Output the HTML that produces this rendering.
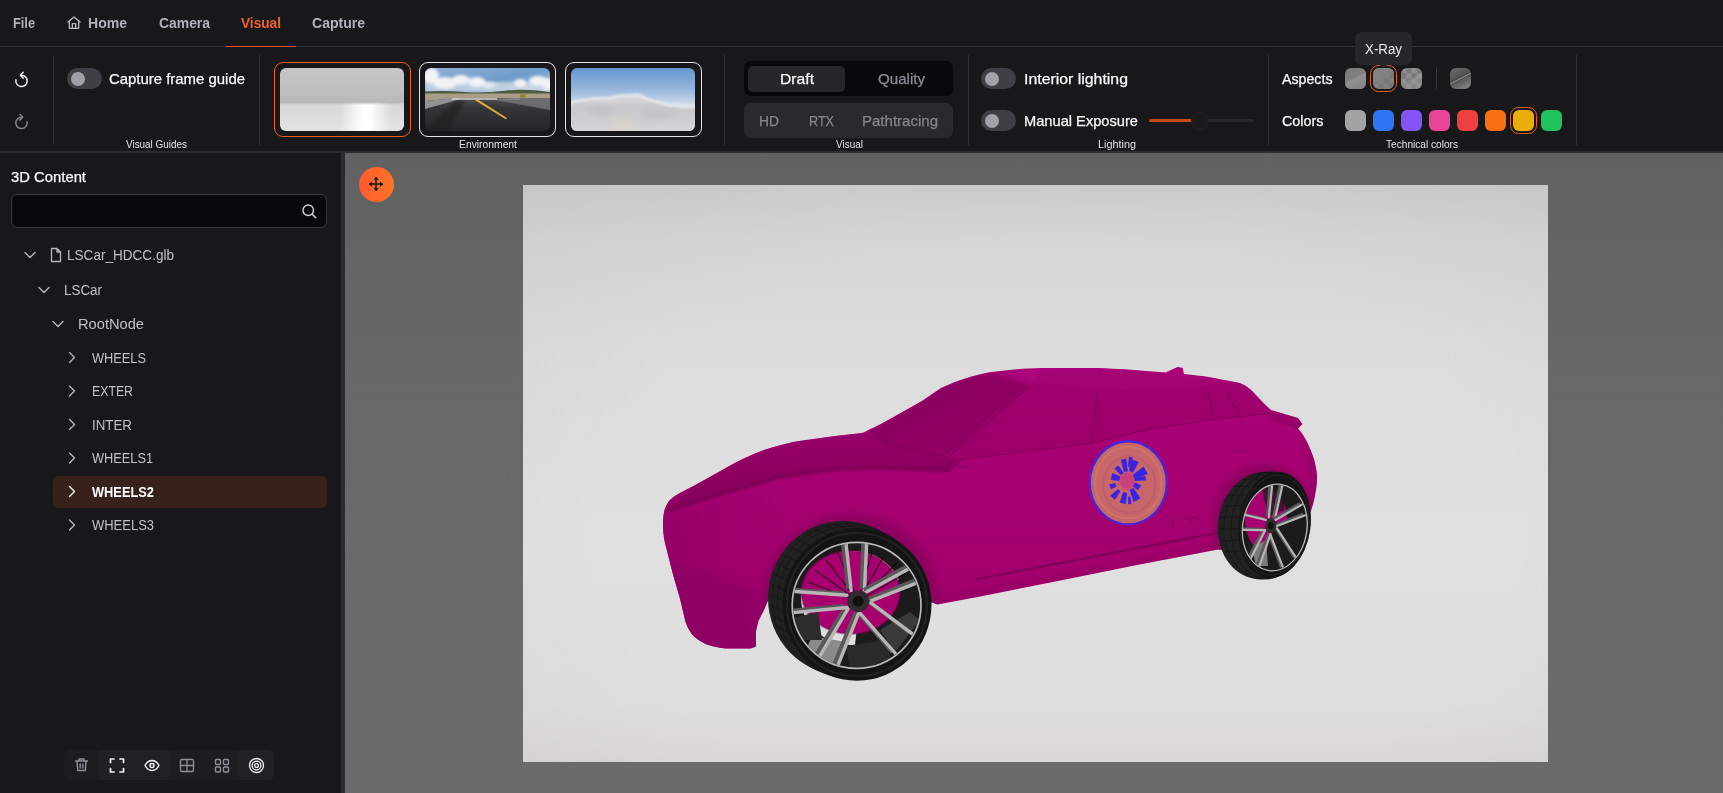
<!DOCTYPE html>
<html>
<head>
<meta charset="utf-8">
<style>
*{box-sizing:border-box;margin:0;padding:0}
html,body{width:1723px;height:793px;overflow:hidden;background:#18181b;font-family:"Liberation Sans",sans-serif;}
.a{position:absolute}
.t{position:absolute;white-space:nowrap;line-height:1;transform-origin:0 50%}
.m{-webkit-text-stroke:.25px currentColor}
.vsep{position:absolute;top:55px;height:90px;width:1px;background:#2f2f35}
.tog{position:absolute;width:35px;height:21px;border-radius:11px;background:#3f3f46}
.tog i{position:absolute;left:4px;top:3.5px;width:14px;height:14px;border-radius:7px;background:#a1a1aa}
.sw{position:absolute;width:21px;height:21px;border-radius:6px;top:110px}
.asw{position:absolute;width:21px;height:21px;border-radius:6px;top:68px;overflow:hidden}
.thumb{position:absolute;top:62px;width:137px;height:75px;border-radius:9px;border:1.5px solid #e4e4e7}
.thumb svg{position:absolute;left:4.5px;top:4.5px;border-radius:6px}
svg{display:block}
</style>
</head>
<body>
<!-- menubar -->
<div class="a" style="left:0;top:0;width:1723px;height:46px;background:#18181b"></div>
<div class="a" style="left:0;top:46px;width:1723px;height:1px;background:#33333a"></div>
<div class="a" style="left:226px;top:45.5px;width:70px;height:1.5px;background:#e8561f"></div>
<!-- home icon -->
<svg class="a" style="left:66px;top:15px" width="16" height="16" viewBox="0 0 24 24" fill="none" stroke="#b9b9c2" stroke-width="2" stroke-linecap="round" stroke-linejoin="round"><path d="M3 10.5 12 3l9 7.5"/><path d="M5 9v11h14V9"/><path d="M9.5 20v-7h5v7"/></svg>
<!-- toolbar -->
<div class="a" style="left:0;top:47px;width:1723px;height:105px;background:#18181b"></div>
<div class="a" style="left:0;top:151px;width:1723px;height:1.5px;background:#2c2c31"></div>
<div class="vsep" style="left:53px"></div>
<div class="vsep" style="left:259px"></div>
<div class="vsep" style="left:724px"></div>
<div class="vsep" style="left:968px"></div>
<div class="vsep" style="left:1268px"></div>
<div class="vsep" style="left:1576px"></div>
<!-- undo / redo -->
<svg class="a" style="left:10px;top:68px" width="24" height="24" viewBox="0 0 24 24" fill="none" stroke="#ededf0" stroke-width="1.5" stroke-linecap="round" stroke-linejoin="round"><path d="M11.500 7.200A5.700 5.700 0 1 1 5.900 11.700"/><path d="M13.200 4.300 10.300 7.200l2.900 2.900"/></svg>
<svg class="a" style="left:10px;top:110px" width="24" height="24" viewBox="0 0 24 24" fill="none" stroke="#85858e" stroke-width="1.5" stroke-linecap="round" stroke-linejoin="round"><path d="M11.500 7.200A5.700 5.700 0 1 0 17.100 11.700"/><path d="M9.800 4.300l2.900 2.900-2.900 2.900"/></svg>
<!-- toggles -->
<div class="tog" style="left:67px;top:68px"><i></i></div>
<div class="tog" style="left:981px;top:68px"><i></i></div>
<div class="tog" style="left:981px;top:110px"><i></i></div>
<!-- env thumbs -->
<div class="thumb" style="left:274px;border-color:#e8611f">
<svg width="124" height="63" viewBox="0 0 125 63" preserveAspectRatio="none"><defs><linearGradient id="e1a" x1="0" y1="0" x2="0" y2="1"><stop offset="0" stop-color="#c6c6c6"/><stop offset=".3" stop-color="#c0c0c0"/><stop offset=".55" stop-color="#b9b9b9"/><stop offset=".585" stop-color="#d8d8d8"/><stop offset="1" stop-color="#e3e3e3"/></linearGradient><linearGradient id="e1b" x1="0" y1="0" x2="1" y2="0"><stop offset=".48" stop-color="#fff" stop-opacity="0"/><stop offset=".66" stop-color="#fff" stop-opacity=".95"/><stop offset=".73" stop-color="#fff" stop-opacity=".95"/><stop offset=".9" stop-color="#fff" stop-opacity="0"/></linearGradient><linearGradient id="e1c" x1="0" y1="0" x2="0" y2="1"><stop offset="0" stop-color="#000"/><stop offset=".12" stop-color="#fff"/><stop offset="1" stop-color="#fff"/></linearGradient><mask id="e1m"><rect y="34" width="125" height="29" fill="url(#e1c)"/></mask></defs><rect width="125" height="63" fill="url(#e1a)"/><rect y="34" width="125" height="29" fill="url(#e1b)" mask="url(#e1m)"/></svg>
</div>
<div class="thumb" style="left:419px">
<svg width="125" height="63" viewBox="0 0 126 63" preserveAspectRatio="none"><defs><linearGradient id="e2a" x1="0" y1="0" x2="1" y2="1"><stop offset="0" stop-color="#8fb0d2"/><stop offset=".5" stop-color="#6f9ccb"/><stop offset="1" stop-color="#c9d6e2"/></linearGradient><linearGradient id="e2b" x1="0" y1="0" x2="0" y2="1"><stop offset="0" stop-color="#505052"/><stop offset=".3" stop-color="#353537"/><stop offset="1" stop-color="#262628"/></linearGradient><filter id="b1" x="-20%" y="-20%" width="140%" height="140%"><feGaussianBlur stdDeviation="1.6"/></filter><filter id="b05" x="-20%" y="-20%" width="140%" height="140%"><feGaussianBlur stdDeviation=".6"/></filter></defs>
<rect width="126" height="30" fill="url(#e2a)"/>
<rect y="14" width="126" height="10" fill="#d3dde6" opacity=".75" filter="url(#b1)"/>
<g fill="#f1f3f5" filter="url(#b1)"><ellipse cx="6" cy="8" rx="8" ry="8"/><ellipse cx="20" cy="15" rx="12" ry="6"/><ellipse cx="36" cy="12" rx="9" ry="5"/><ellipse cx="52" cy="14" rx="9" ry="5"/><ellipse cx="64" cy="17" rx="8" ry="3" opacity=".8"/><ellipse cx="96" cy="15" rx="6" ry="4"/><ellipse cx="114" cy="13" rx="9" ry="5"/><ellipse cx="124" cy="16" rx="6" ry="6"/></g>
<path d="M0 23.500Q20 22.500 40 24T80 22.800T126 24V26.500H0Z" fill="#4f5a42" filter="url(#b05)"/>
<rect y="25.500" width="126" height="8" fill="#a99d86"/>
<path d="M0 33 32 30H126V63H0Z" fill="url(#e2b)"/>
<path d="M90 30h36v12L70 32Z" fill="#77777a" opacity=".8" filter="url(#b05)"/>
<path d="M0 33 32 30 36 31 0 41Z" fill="#9a9a9c" opacity=".9" filter="url(#b05)"/>
<path d="M0 63 30 33H40L22 63Z" fill="#1c1c1e" opacity=".55" filter="url(#b1)"/>
<path d="M27 30h46v2H27z" fill="#dedede" opacity=".7" filter="url(#b05)"/><path d="M74 30.500h22v1H74z" fill="#bdbdbd" opacity=".5"/>
<path d="M50 32 81 51l2-.8L54 32Z" fill="#dfae35"/>
<rect x="96" y="26.500" width="5" height="3" fill="#8f7d1e"/>
</svg>
</div>
<div class="thumb" style="left:565px">
<svg width="124.500" height="63" viewBox="0 0 125 63" preserveAspectRatio="none"><defs><linearGradient id="e3a" x1="0" y1="0" x2="0" y2="1"><stop offset="0" stop-color="#6596cf"/><stop offset=".3" stop-color="#8fb2da"/><stop offset=".48" stop-color="#b7cbe3"/><stop offset=".62" stop-color="#dde5ee"/><stop offset="1" stop-color="#d4d4d6"/></linearGradient><linearGradient id="e3b" x1="0" y1="0" x2="0" y2="1"><stop offset="0" stop-color="#dcdcde"/><stop offset=".3" stop-color="#c9c9cb"/><stop offset=".7" stop-color="#cfcfd1"/><stop offset="1" stop-color="#dadadc"/></linearGradient><filter id="b2" x="-20%" y="-30%" width="140%" height="160%"><feGaussianBlur stdDeviation="1.100"/></filter><filter id="b3" x="-20%" y="-30%" width="140%" height="160%"><feGaussianBlur stdDeviation="2.500"/></filter></defs><rect width="125" height="63" fill="url(#e3a)"/>
<path d="M-3 36C4 33 9 32 14 32C22 30 30 30.500 38 30C46 27.500 56 27.500 63 27C68 26 72 28 76 31C84 33 92 35.500 97 37C108 38.500 116 38.500 128 39V66H-3Z" fill="url(#e3b)" filter="url(#b2)"/>
<path d="M-3 36C4 33 9 32 14 32C22 30 30 30.500 38 30C46 27.500 56 27.500 63 27C68 26 72 28 76 31C84 33 92 35.500 97 37C108 38.500 116 38.500 128 39" fill="none" stroke="#ededf0" stroke-width="2.500" opacity=".8" filter="url(#b2)"/>
<ellipse cx="50" cy="57" rx="12" ry="9" fill="#d9d2c8" opacity=".6" filter="url(#b3)"/>
<ellipse cx="30" cy="42" rx="14" ry="5" fill="#bdbdbf" opacity=".6" filter="url(#b3)"/><ellipse cx="88" cy="46" rx="18" ry="5" fill="#bfbfc1" opacity=".6" filter="url(#b3)"/></svg>
</div>
<!-- visual group -->
<div class="a" style="left:744px;top:61px;width:209px;height:35px;border-radius:7px;background:#09090b"></div>
<div class="a" style="left:748px;top:66px;width:97px;height:26px;border-radius:5px;background:#27272a"></div>
<div class="a" style="left:744px;top:103px;width:209px;height:35px;border-radius:7px;background:#2a2a2e"></div>
<!-- slider -->
<div class="a" style="left:1149px;top:119px;width:105px;height:3px;border-radius:2px;background:#27272a"></div>
<div class="a" style="left:1149px;top:119px;width:46px;height:3px;border-radius:2px;background:#c44a1c"></div>
<div class="a" style="left:1191px;top:111.5px;width:18px;height:18px;border-radius:9px;background:#1a1a1d;border:1.5px solid #242428"></div>
<!-- aspects -->
<div class="asw" style="left:1345px"><svg width="21" height="21"><defs><linearGradient id="a1" x1="0" y1="0" x2=".6" y2="1"><stop offset="0" stop-color="#777"/><stop offset="1" stop-color="#8d8d8d"/></linearGradient><linearGradient id="a1b" x1="0" y1="0" x2=".6" y2="1"><stop offset="0" stop-color="#a0a0a0"/><stop offset="1" stop-color="#848484"/></linearGradient></defs><rect width="21" height="21" fill="url(#a1)"/><path d="M0 15.500 21 4.500V21H0Z" fill="url(#a1b)"/></svg></div>
<div class="a" style="left:1370px;top:65px;width:27px;height:27px;border-radius:8.500px;border:1.500px solid #e8611f"></div>
<div class="asw" style="left:1373px"><svg width="21" height="21"><rect width="21" height="21" fill="#7f7f7f"/><g fill="#6f6f6f" opacity=".8"><rect x="0" y="10.500" width="5.250" height="5.250"/><rect x="10.500" y="10.500" width="5.250" height="5.250"/><rect x="5.250" y="5.250" width="5.250" height="5.250"/><rect x="15.750" y="5.250" width="5.250" height="5.250"/><rect x="5.250" y="15.750" width="5.250" height="5.250"/><rect x="15.750" y="15.750" width="5.250" height="5.250"/></g><path d="M0 0H21V5L0 16Z" fill="#838383" opacity=".85"/><path d="M0 16 21 5V21H0Z" fill="#8c8c8c" opacity=".25"/></svg></div>
<div class="asw" style="left:1401px"><svg width="21" height="21"><rect width="21" height="21" fill="#8f8f8f"/><g fill="#7a7a7a"><rect x="5.250" y="0" width="5.250" height="5.250"/><rect x="15.750" y="0" width="5.250" height="5.250"/><rect x="0" y="5.250" width="5.250" height="5.250"/><rect x="10.500" y="5.250" width="5.250" height="5.250"/><rect x="5.250" y="10.500" width="5.250" height="5.250"/><rect x="15.750" y="10.500" width="5.250" height="5.250"/><rect x="0" y="15.750" width="5.250" height="5.250"/><rect x="10.500" y="15.750" width="5.250" height="5.250"/></g><path d="M0 16 21 5V21H0Z" fill="#a0a0a0" opacity=".35"/></svg></div>
<div class="a" style="left:1436px;top:68px;width:1px;height:21px;background:#34343a"></div>
<div class="asw" style="left:1450px"><svg width="21" height="21"><defs><linearGradient id="a4" x1="0" y1="0" x2=".5" y2="1"><stop offset="0" stop-color="#6e6e6e"/><stop offset=".5" stop-color="#555"/><stop offset=".52" stop-color="#4a4a4a"/><stop offset="1" stop-color="#7a7a7a"/></linearGradient></defs><rect width="21" height="21" fill="url(#a4)"/><path d="M0 16 21 5" stroke="#a8a8a8" stroke-width=".9" opacity=".8"/></svg></div>
<!-- colors -->
<div class="sw" style="left:1345px;background:#a3a3a3"></div>
<div class="sw" style="left:1373px;background:#2f74f2"></div>
<div class="sw" style="left:1401px;background:#8554f4"></div>
<div class="sw" style="left:1429px;background:#ea4496"></div>
<div class="sw" style="left:1457px;background:#ec3f3f"></div>
<div class="sw" style="left:1485px;background:#f86f14"></div>
<div class="a" style="left:1510px;top:107px;width:27px;height:27px;border-radius:8.5px;border:1.5px solid #e8611f"></div>
<div class="sw" style="left:1513px;background:#ebad0a"></div>
<div class="sw" style="left:1541px;background:#20c05a"></div>
<!-- tooltip -->
<div class="a" style="left:1355px;top:32px;width:57px;height:33px;border-radius:7px;background:#27272a"></div>
<svg class="a" style="left:1378px;top:64px" width="11" height="5"><path d="M0 0h11L5.500 4Z" fill="#27272a"/></svg>
<!-- left panel -->
<div class="a" style="left:0;top:153px;width:341px;height:640px;background:#18181b"></div>
<div class="a" style="left:341px;top:153px;width:4px;height:640px;background:#2b2b30"></div>
<div class="a" style="left:11px;top:194px;width:316px;height:34px;border-radius:6px;background:#09090b;border:1px solid #3a3a40"></div>
<svg class="a" style="left:300px;top:202px" width="18" height="18" viewBox="0 0 24 24" fill="none" stroke="#d0d0d6" stroke-width="1.900" stroke-linecap="round"><circle cx="11" cy="11" r="7"/><path d="M16.5 16.5 21 21"/></svg>
<div class="a" style="left:53px;top:476px;width:274px;height:31.5px;border-radius:5px;background:#37211a"></div>
<!-- chevrons -->
<svg class="a" style="left:0;top:240px" width="100" height="300" viewBox="0 0 100 300" fill="none" stroke="#b6b6be" stroke-width="1.4" stroke-linecap="round" stroke-linejoin="round">
<path d="M25 12.5l5 5 5-5"/>
<path d="M39 47.5l5 5 5-5"/>
<path d="M53 81.5l5 5 5-5"/>
<path d="M69.5 112.5l5 5-5 5"/>
<path d="M69.5 146l5 5-5 5"/>
<path d="M69.5 179.5l5 5-5 5"/>
<path d="M69.5 213l5 5-5 5"/>
<path d="M69.5 246.5l5 5-5 5" stroke="#fff"/>
<path d="M69.5 280l5 5-5 5"/>
<path d="M51.500 8.500h5.500l3.500 3.500v9.500h-9z M57 8.500v3.500h3.500" stroke-width="1.300"/>
</svg>
<!-- bottom toolbar -->
<div class="a" style="left:64px;top:750px;width:210px;height:30px;border-radius:6px;background:#1d1d20"></div>
<div class="a" style="left:99px;top:750px;width:70px;height:30px;background:#212124"></div>
<div class="a" style="left:239px;top:750px;width:35px;height:30px;border-radius:0 6px 6px 0;background:#212124"></div>
<svg class="a" style="left:64px;top:750px" width="210" height="30" viewBox="0 0 210 30" fill="none" stroke-width="1.4" stroke-linecap="round" stroke-linejoin="round">
<g stroke="#8e8e97"><path d="M11.5 11h12M13 11l.7 9.5h7.6L22 11M15 11V9h5v2M16.2 14v4M18.8 14v4"/></g>
<g stroke="#f4f4f5" stroke-width="1.7"><path d="M46.500 12.5V9h3.500M56 9h3.500v3.500M59.500 18.500V22H56M50 22h-3.500v-3.500"/></g>
<g stroke="#f4f4f5" stroke-width="1.5"><path d="M81 15.500c2-3.700 4.500-5 7-5s5 1.300 7 5c-2 3.700-4.500 5-7 5s-5-1.300-7-5z"/><circle cx="88" cy="15.500" r="2"/></g>
<g stroke="#8e8e97"><rect x="116.500" y="9.500" width="13" height="12" rx="1.500"/><path d="M116.500 15.500h13M123 9.500v12"/></g>
<g stroke="#8e8e97"><rect x="151.500" y="9.500" width="5" height="5" rx="1"/><rect x="159.500" y="9.500" width="5" height="5" rx="1"/><rect x="151.500" y="17" width="5" height="5" rx="1"/><rect x="159.500" y="17" width="5" height="5" rx="1"/></g>
<g stroke="#f4f4f5" stroke-width="1.3"><circle cx="192.500" cy="15.500" r="7"/><circle cx="192.500" cy="15.500" r="4.400"/><circle cx="192.500" cy="15.500" r="1.900"/></g>
</svg>
<span class="t" style="left:13px;top:16.05px;font-size:14.5px;font-weight:bold;color:#b2b2bc;transform:scaleX(0.8806)">File</span>
<span class="t" style="left:88px;top:16.05px;font-size:14.5px;font-weight:bold;color:#b2b2bc;transform:scaleX(0.9678)">Home</span>
<span class="t" style="left:159px;top:16.05px;font-size:14.5px;font-weight:bold;color:#b2b2bc;transform:scaleX(0.9586)">Camera</span>
<span class="t" style="left:241px;top:16.05px;font-size:14.5px;font-weight:bold;color:#f4602a;transform:scaleX(0.9422)">Visual</span>
<span class="t" style="left:312px;top:16.05px;font-size:14.5px;font-weight:bold;color:#b2b2bc;transform:scaleX(0.9672)">Capture</span>
<span class="t m" style="left:109px;top:70.90px;font-size:15px;font-weight:normal;color:#fafafa;transform:scaleX(0.9945)">Capture frame guide</span>
<span class="t m" style="left:1024px;top:70.90px;font-size:15px;font-weight:normal;color:#fafafa;transform:scaleX(1.0570)">Interior lighting</span>
<span class="t m" style="left:1024px;top:112.90px;font-size:15px;font-weight:normal;color:#fafafa;transform:scaleX(0.9766)">Manual Exposure</span>
<span class="t m" style="left:1281.5px;top:70.90px;font-size:15px;font-weight:normal;color:#fafafa;transform:scaleX(0.9464)">Aspects</span>
<span class="t m" style="left:1281.5px;top:112.90px;font-size:15px;font-weight:normal;color:#fafafa;transform:scaleX(0.9571)">Colors</span>
<span class="t" style="left:125.5px;top:138.65px;font-size:10.5px;font-weight:normal;color:#e4e4e7;transform:scaleX(0.9441)">Visual Guides</span>
<span class="t" style="left:459px;top:138.65px;font-size:10.5px;font-weight:normal;color:#e4e4e7;transform:scaleX(0.9838)">Environment</span>
<span class="t" style="left:835.5px;top:138.65px;font-size:10.5px;font-weight:normal;color:#e4e4e7;transform:scaleX(0.9500)">Visual</span>
<span class="t" style="left:1098px;top:138.65px;font-size:10.5px;font-weight:normal;color:#e4e4e7;transform:scaleX(1.0331)">Lighting</span>
<span class="t" style="left:1386px;top:138.65px;font-size:10.5px;font-weight:normal;color:#e4e4e7;transform:scaleX(0.9638)">Technical colors</span>
<span class="t m" style="left:780px;top:70.90px;font-size:15px;font-weight:normal;color:#fafafa;transform:scaleX(1.0457)">Draft</span>
<span class="t m" style="left:877.5px;top:70.90px;font-size:15px;font-weight:normal;color:#8b8b94;transform:scaleX(1.0067)">Quality</span>
<span class="t m" style="left:759px;top:112.90px;font-size:15px;font-weight:normal;color:#85858e;transform:scaleX(0.9229)">HD</span>
<span class="t m" style="left:808.5px;top:112.90px;font-size:15px;font-weight:normal;color:#85858e;transform:scaleX(0.8408)">RTX</span>
<span class="t m" style="left:862px;top:112.90px;font-size:15px;font-weight:normal;color:#85858e;transform:scaleX(1.0014)">Pathtracing</span>
<span class="t" style="left:1365px;top:42.30px;font-size:14px;font-weight:normal;color:#ececef;transform:scaleX(0.9510)">X-Ray</span>
<span class="t m" style="left:11px;top:168.90px;font-size:15px;font-weight:normal;color:#fafafa;transform:scaleX(0.9883)">3D Content</span>
<span class="t" style="left:67px;top:248.30px;font-size:14px;font-weight:normal;color:#c0c0c8;transform:scaleX(0.9685)">LSCar_HDCC.glb</span>
<span class="t" style="left:64.3px;top:283.30px;font-size:14px;font-weight:normal;color:#c0c0c8;transform:scaleX(0.9575)">LSCar</span>
<span class="t" style="left:78px;top:317.30px;font-size:14px;font-weight:normal;color:#c0c0c8;transform:scaleX(1.0468)">RootNode</span>
<span class="t" style="left:92px;top:350.80px;font-size:14px;font-weight:normal;color:#c0c0c8;transform:scaleX(0.9133)">WHEELS</span>
<span class="t" style="left:92px;top:384.30px;font-size:14px;font-weight:normal;color:#c0c0c8;transform:scaleX(0.8782)">EXTER</span>
<span class="t" style="left:92px;top:417.80px;font-size:14px;font-weight:normal;color:#c0c0c8;transform:scaleX(0.9524)">INTER</span>
<span class="t" style="left:92px;top:451.30px;font-size:14px;font-weight:normal;color:#c0c0c8;transform:scaleX(0.9115)">WHEELS1</span>
<span class="t" style="left:92px;top:484.80px;font-size:14px;font-weight:bold;color:#ffffff;transform:scaleX(0.9160)">WHEELS2</span>
<span class="t" style="left:92px;top:518.30px;font-size:14px;font-weight:normal;color:#c0c0c8;transform:scaleX(0.9265)">WHEELS3</span>
<div class="a" id="view" style="left:345px;top:153px;width:1378px;height:640px;background:linear-gradient(180deg,#616161 0,#676767 30%,#6a6a6a 70%,#6a6a6a 100%);overflow:hidden">
<div class="a" style="left:14px;top:14px;width:35px;height:35px;border-radius:50%;background:linear-gradient(90deg,#ff5a32,#ff7426);z-index:3"></div>
<svg class="a" style="left:22.700px;top:23.400px;z-index:4" width="16" height="16" viewBox="0 0 16 16" fill="#1c1c1c" stroke="#1c1c1c" stroke-width="1.500" stroke-linecap="round" stroke-linejoin="round"><path d="M8 2.500v11M2.500 8h11" fill="none"/><path d="M8 1.300 6.200 3.600h3.600ZM8 14.700 6.200 12.400h3.600ZM1.300 8 3.600 6.200v3.600ZM14.700 8 12.400 6.200v3.600Z" stroke-width=".8"/></svg>
<div class="a" style="left:178px;top:32px;width:1025px;height:577px;background:radial-gradient(ellipse 80% 90% at 52% 60%,rgba(0,0,0,0) 55%,rgba(0,0,0,.04) 100%),linear-gradient(180deg,#cecdcd 0,#d7d6d6 10%,#dddcdc 28%,#e1e0e0 62%,#dfdede 90%,#d9d7d7 100%)"></div>
<svg class="a" style="left:-345px;top:-153px" width="1723" height="793" viewBox="0 0 1723 793">
<defs>
<linearGradient id="bodyg" x1="0" y1="0" x2="0" y2="1"><stop offset="0" stop-color="#a9037a"/><stop offset=".35" stop-color="#a60072"/><stop offset=".75" stop-color="#a2006d"/><stop offset="1" stop-color="#98006a"/></linearGradient>
<linearGradient id="frontg" x1="0" y1="0" x2="1" y2="0"><stop offset="0" stop-color="#8f0064"/><stop offset="1" stop-color="#a2006e" stop-opacity="0"/></linearGradient>
<linearGradient id="hoodg" x1="0" y1="0" x2=".25" y2="1"><stop offset="0" stop-color="#9c006b"/><stop offset="1" stop-color="#800058"/></linearGradient>
<linearGradient id="wsg" x1="0" y1="0" x2="1" y2="1"><stop offset="0" stop-color="#820059"/><stop offset="1" stop-color="#9a0069"/></linearGradient>
<filter id="bl1" x="-10%" y="-10%" width="120%" height="120%"><feGaussianBlur stdDeviation="1.2"/></filter>
<filter id="bl3" x="-20%" y="-20%" width="140%" height="140%"><feGaussianBlur stdDeviation="3"/></filter>
<filter id="bl6" x="-30%" y="-30%" width="160%" height="160%"><feGaussianBlur stdDeviation="6"/></filter>
<clipPath id="bodyclip"><use href="#bodyp"/></clipPath>
</defs>
<path id="bodyp" d="M670 500C676 494 690 488 699 483L731 465C745 457.500 758 452 767 449C780 445 792 442 799 441L835 436L862 433C872 428.500 879 425 885 421.700L921.500 401.300L941 388C958 380 974 375 991 372C1010 369.500 1028 368.300 1042 368L1092 368C1110 368.200 1128 369.500 1143 370.700L1165.500 372.500L1177.500 367L1182.500 367.800L1184 374L1206 376.500C1220 379 1230 381 1240 383C1247 386 1251 389.500 1255 394L1264 403.500L1271 410L1298 418L1302.500 424L1298 428.500C1303 434 1305 438 1307 442C1311 450 1313 456 1314.500 461C1316 468 1317 472 1317 477C1317 485 1316 490 1315 495C1314 502 1312 508 1310 513L1304 528L1280 548L1240 552L1218 549.500L1136.800 565L1057.900 580.900L979 596.700L937.500 604.600L925 600L880 560L800 575L790 590L770 596L763.500 611L758.400 621L756 631L756 646.500L750.800 648.400L725.600 648.400C718 647.500 711 646 705.500 643.900C699 641 694.500 637.500 691.600 633.800C688.500 629.500 686.500 625 685.300 621L680 598.500L672.700 573.300L665 543C663.600 536 663 530 663 525.400C663 519 663.500 514 664.600 510C665.500 506.500 667.500 503 670 500Z" fill="url(#bodyg)"/>
<g clip-path="url(#bodyclip)">
<rect x="660" y="480" width="150" height="180" fill="url(#frontg)" opacity=".8"/>
<path d="M664 560 760 590 758 650 690 640Z" fill="#870060" opacity=".55" filter="url(#bl6)"/>
<path d="M664 512 699 483 731 465 767 449 799 441 835 436 862 433C900 447 930 455 962 460L950 471.500 877 468.500 826 471 776 478.500 725.600 493.500 665 512Z" fill="url(#hoodg)" filter="url(#bl1)"/>
<path d="M667 511 725.600 493 776 478 826 470.500 877 468 950 471" fill="none" stroke="#6c004a" stroke-width="3" opacity=".55" filter="url(#bl1)"/>
<path d="M668 516 726 498 776 483.500 826 476 877 473.500 950 476" fill="none" stroke="#b00a7a" stroke-width="4" opacity=".35" filter="url(#bl3)"/>
<path d="M868 432 921 402 941 389C958 381 974 376 991 373L1030 385 950 455 916 468Z" fill="url(#wsg)" opacity=".95" filter="url(#bl1)"/>
<path d="M962 459 1092 443 1150 429 1215.600 419 1271 413 1264 403.500 1255 394 1240 384 1143 372 1040 372 1030 386 952 456Z" fill="#8f0060" opacity=".4" filter="url(#bl1)"/>
<path d="M1000 370 1160 371 1240 383 1150 392 1040 384Z" fill="#b20a7e" opacity=".35" filter="url(#bl3)"/>
<g fill="none" stroke="#7c0054" stroke-width="1.2" opacity=".7"><path d="M862 434C900 447 930 455 962 459.500L1092 443L1150 429L1215.600 419L1271 413"/><path d="M950 456 1030 386"/><path d="M944 455 1024 384"/><path d="M1092 443C1094 420 1096 400 1098 385"/><path d="M1207.400 387.700 1212.300 416"/><path d="M1227 394.300 1240 415.600"/></g>
<path d="M975 579.500 1223.600 531.600" stroke="#780051" stroke-width="2.200" opacity=".8" fill="none"/>
<path d="M937 604 1218 549.500V541L937 596Z" fill="#93005f" opacity=".35"/>
<ellipse cx="850" cy="600" rx="88" ry="86" fill="#6d0049" opacity=".4" filter="url(#bl3)"/>
<ellipse cx="1264" cy="524" rx="52" ry="60" fill="#6d0049" opacity=".4" filter="url(#bl3)"/>
<path d="M1271 410 1298 418 1302 424 1298 429 1268 420Z" fill="#8a005e" opacity=".5"/>
<path d="M1300 440C1312 470 1312 500 1304 520L1320 520 1320 440Z" fill="#90005f" opacity=".4" filter="url(#bl1)"/>
<g fill="none" stroke="#740050" stroke-width="1" opacity=".7"><path d="M1173 528c-2-6 0-10 4-11M1182 518c5-1 10 2 12 8M1188 516c6 0 12 4 14 10"/><path d="M957 465c4 3 9 3 13 0"/><path d="M1090 461l8 3"/><path d="M1229 448c6 5 14 5 20 0"/></g>
</g>
<ellipse cx="1128.3" cy="482.8" rx="38.6" ry="41.6" fill="#c7676a"/>
<ellipse cx="1128.3" cy="482.8" rx="33.2" ry="35.8" fill="none" stroke="#d07a64" stroke-width="2" opacity=".7"/>
<ellipse cx="1129.3" cy="484.8" rx="26.2" ry="28.3" fill="none" stroke="#b85a70" stroke-width="2.5" opacity=".55"/>
<ellipse cx="1127.3" cy="480.8" rx="8.1" ry="8.7" fill="#c8407c" filter="url(#bl1)"/>
<path d="M1130.4 466.9L1132.2 457.6L1129.3 457.2L1128.4 466.6Z" fill="#3a22e2" stroke="#3a22e2" stroke-width=".8" stroke-linejoin="round"/>
<path d="M1127.4 471.1L1125.9 459.1L1121.3 460.0L1124.2 471.7Z" fill="#3a22e2" stroke="#3a22e2" stroke-width=".8" stroke-linejoin="round"/>
<path d="M1123.1 472.8L1118.3 465.8L1114.9 468.6L1120.8 474.7Z" fill="#3a22e2" stroke="#3a22e2" stroke-width=".8" stroke-linejoin="round"/>
<path d="M1119.8 476.5L1112.6 473.6L1111.1 479.6L1118.9 480.4Z" fill="#3a22e2" stroke="#3a22e2" stroke-width=".8" stroke-linejoin="round"/>
<path d="M1115.0 483.5L1109.7 484.8L1111.1 488.7L1116.0 486.3Z" fill="#3a22e2" stroke="#3a22e2" stroke-width=".8" stroke-linejoin="round"/>
<path d="M1118.1 489.5L1110.7 495.7L1114.9 499.3L1120.0 491.2Z" fill="#3a22e2" stroke="#3a22e2" stroke-width=".8" stroke-linejoin="round"/>
<path d="M1123.4 492.4L1120.2 502.4L1125.5 503.5L1126.6 493.1Z" fill="#3a22e2" stroke="#3a22e2" stroke-width=".8" stroke-linejoin="round"/>
<path d="M1128.4 497.2L1128.6 503.8L1131.2 503.5L1130.1 497.0Z" fill="#3a22e2" stroke="#3a22e2" stroke-width=".8" stroke-linejoin="round"/>
<path d="M1130.1 490.0L1133.8 501.4L1140.1 498.3L1133.4 488.4Z" fill="#3a22e2" stroke="#3a22e2" stroke-width=".8" stroke-linejoin="round"/>
<path d="M1133.3 486.2L1137.8 489.9L1140.6 485.2L1135.2 483.0Z" fill="#3a22e2" stroke="#3a22e2" stroke-width=".8" stroke-linejoin="round"/>
<path d="M1135.1 480.6L1145.6 480.0L1145.1 476.4L1134.8 478.4Z" fill="#3a22e2" stroke="#3a22e2" stroke-width=".8" stroke-linejoin="round"/>
<path d="M1135.2 478.6L1147.3 473.8L1143.4 467.0L1133.2 474.9Z" fill="#3a22e2" stroke="#3a22e2" stroke-width=".8" stroke-linejoin="round"/>
<path d="M1132.9 472.2L1138.3 462.3L1132.3 459.9L1129.4 470.8Z" fill="#3a22e2" stroke="#3a22e2" stroke-width=".8" stroke-linejoin="round"/>
<ellipse cx="1128.3" cy="482.8" rx="38.6" ry="41.6" fill="none" stroke="#4a24d8" stroke-width="2.4"/>
<g id="fw">
<ellipse cx="843" cy="598" rx="75" ry="77" fill="#212121" transform="rotate(0 843 598)"/>
<path d="M793.4 642.0L780.0 635.3" stroke="#141414" stroke-width="1.1" opacity=".8"/>
<path d="M788.9 632.5L775.5 625.8" stroke="#141414" stroke-width="1.1" opacity=".8"/>
<path d="M785.7 622.3L772.3 615.8" stroke="#141414" stroke-width="1.1" opacity=".8"/>
<path d="M784.0 611.9L770.6 605.3" stroke="#141414" stroke-width="1.1" opacity=".8"/>
<path d="M783.7 601.2L770.3 594.7" stroke="#141414" stroke-width="1.1" opacity=".8"/>
<path d="M784.9 590.7L771.5 584.2" stroke="#141414" stroke-width="1.1" opacity=".8"/>
<path d="M787.5 580.4L774.1 574.0" stroke="#141414" stroke-width="1.1" opacity=".8"/>
<path d="M791.5 570.6L778.1 564.2" stroke="#141414" stroke-width="1.1" opacity=".8"/>
<path d="M796.9 561.4L783.4 555.2" stroke="#141414" stroke-width="1.1" opacity=".8"/>
<path d="M803.4 553.2L789.9 546.9" stroke="#141414" stroke-width="1.1" opacity=".8"/>
<path d="M811.1 546.0L797.5 539.8" stroke="#141414" stroke-width="1.1" opacity=".8"/>
<path d="M819.6 539.9L805.9 533.7" stroke="#141414" stroke-width="1.1" opacity=".8"/>
<path d="M828.9 535.2L815.2 529.0" stroke="#141414" stroke-width="1.1" opacity=".8"/>
<path d="M838.8 531.8L824.9 525.6" stroke="#141414" stroke-width="1.1" opacity=".8"/>
<path d="M849.0 529.9L835.1 523.8" stroke="#141414" stroke-width="1.1" opacity=".8"/>
<path d="M859.4 529.5L845.4 523.3" stroke="#141414" stroke-width="1.1" opacity=".8"/>
<ellipse cx="852.1" cy="602.2" rx="74.7" ry="76.5" fill="none" stroke="#161616" stroke-width="1" opacity=".8" transform="rotate(0 852.1 602.2)"/>
<ellipse cx="847.2" cy="600.0" rx="74.8" ry="76.8" fill="none" stroke="#161616" stroke-width="1" opacity=".8" transform="rotate(0 847.2 600.0)"/>
<ellipse cx="857" cy="604.5" rx="74.5" ry="76.2" fill="#141414" transform="rotate(0 857 604.5)"/>
<ellipse cx="857" cy="604.5" rx="70.0" ry="71.6" fill="none" stroke="#232323" stroke-width="2" transform="rotate(0 857 604.5)"/>
<clipPath id="fwc"><ellipse cx="856.6" cy="605.3" rx="63.4" ry="62.1" transform="rotate(0 856.6 605.3)"/></clipPath>
<ellipse cx="856.6" cy="605.3" rx="64.4" ry="63" fill="#1b1b1b" transform="rotate(0 856.6 605.3)"/>
<g clip-path="url(#fwc)">
<ellipse cx="852" cy="598" rx="51" ry="47" fill="#dedede"/>
<path d="M860 600 935 560 935 690 850 690Z" fill="#1b1b1b"/>
<ellipse cx="850.6" cy="592.4" rx="49" ry="41.5" fill="#a8006f"/>
<ellipse cx="850.6" cy="592.4" rx="49" ry="41.5" fill="none" stroke="#7a0052" stroke-width="2" opacity=".5"/>
<g stroke="#1a0012" stroke-width="1.3" opacity=".75"><path d="M858 601 884 556M858 601 897 563M858 601 905 574M858 601 826 560M858 601 815 570M858 601 808 582M858 601 872 552M858 601 838 553"/></g>
<path d="M812 636 846 642 838 668 806 650Z" fill="#8a8a8a"/>
<path d="M792 618 818 612 822 640 800 640Z" fill="#2c2c2c"/>
<path d="M880 630 910 612 920 620 895 652Z" fill="#3a3a3a"/>
<path d="M846 646 886 640 892 664 850 670Z" fill="#2a2a2a"/>
<path d="M848.5 589.1L842.8 542.3" stroke="#595959" stroke-width="4.2"/>
<path d="M851.2 590.6L846.1 544.1" stroke="#b6b6b6" stroke-width="3.4" stroke-linecap="round"/>
<path d="M861.8 588.7L863.3 542.2" stroke="#595959" stroke-width="4.2"/>
<path d="M864.5 590.2L866.6 544.0" stroke="#b6b6b6" stroke-width="3.4" stroke-linecap="round"/>
<path d="M863.9 590.2L907.9 565.8" stroke="#595959" stroke-width="4.2"/>
<path d="M866.7 591.7L911.2 567.6" stroke="#b6b6b6" stroke-width="3.4" stroke-linecap="round"/>
<path d="M868.4 599.3L914.4 580.8" stroke="#595959" stroke-width="4.2"/>
<path d="M871.1 600.8L917.7 582.6" stroke="#b6b6b6" stroke-width="3.4" stroke-linecap="round"/>
<path d="M868.2 601.4L909.4 632.4" stroke="#595959" stroke-width="4.2"/>
<path d="M871.0 602.9L912.7 634.2" stroke="#b6b6b6" stroke-width="3.4" stroke-linecap="round"/>
<path d="M857.7 612.1L892.6 652.2" stroke="#595959" stroke-width="4.2"/>
<path d="M860.4 613.6L895.9 654.0" stroke="#b6b6b6" stroke-width="3.4" stroke-linecap="round"/>
<path d="M855.7 612.3L834.6 663.8" stroke="#595959" stroke-width="4.2"/>
<path d="M858.4 613.8L837.9 665.6" stroke="#b6b6b6" stroke-width="3.4" stroke-linecap="round"/>
<path d="M845.3 607.4L816.1 655.0" stroke="#595959" stroke-width="4.2"/>
<path d="M848.0 608.9L819.4 656.8" stroke="#b6b6b6" stroke-width="3.4" stroke-linecap="round"/>
<path d="M844.2 593.7L791.5 589.7" stroke="#595959" stroke-width="4.2"/>
<path d="M846.9 595.2L794.7 591.5" stroke="#b6b6b6" stroke-width="3.4" stroke-linecap="round"/>
<path d="M844.3 606.0L790.3 610.8" stroke="#595959" stroke-width="4.2"/>
<path d="M847.1 607.5L793.6 612.6" stroke="#b6b6b6" stroke-width="3.4" stroke-linecap="round"/>
<ellipse cx="858.2" cy="601.2" rx="10.9" ry="10.7" fill="#2e2e2e"/>
<ellipse cx="858.2" cy="601.2" rx="5.5" ry="5.4" fill="#111"/>
</g>
<ellipse cx="856.6" cy="605.3" rx="64.4" ry="63" fill="none" stroke="#b9b9b9" stroke-width="1.7" transform="rotate(0 856.6 605.3)"/>
</g>
<g id="rw">
<ellipse cx="1263" cy="525.5" rx="45" ry="54" fill="#212121" transform="rotate(8 1263 525.5)"/>
<path d="M1243.8 551.2L1225.2 551.7" stroke="#141414" stroke-width="0.8" opacity=".8"/>
<path d="M1240.6 540.3L1221.3 540.8" stroke="#141414" stroke-width="0.8" opacity=".8"/>
<path d="M1239.1 528.7L1219.5 529.2" stroke="#141414" stroke-width="0.8" opacity=".8"/>
<path d="M1239.5 516.8L1219.9 517.3" stroke="#141414" stroke-width="0.8" opacity=".8"/>
<path d="M1241.6 505.4L1222.5 505.9" stroke="#141414" stroke-width="0.8" opacity=".8"/>
<path d="M1245.5 494.9L1227.2 495.5" stroke="#141414" stroke-width="0.8" opacity=".8"/>
<path d="M1250.8 486.1L1233.8 486.6" stroke="#141414" stroke-width="0.8" opacity=".8"/>
<path d="M1257.3 479.2L1241.8 479.7" stroke="#141414" stroke-width="0.8" opacity=".8"/>
<path d="M1264.7 474.6L1251.0 475.1" stroke="#141414" stroke-width="0.8" opacity=".8"/>
<path d="M1272.6 472.7L1260.7 473.2" stroke="#141414" stroke-width="0.8" opacity=".8"/>
<ellipse cx="1270.5" cy="525.2" rx="39.1" ry="53.5" fill="none" stroke="#161616" stroke-width="1" opacity=".8" transform="rotate(8 1270.5 525.2)"/>
<ellipse cx="1266.5" cy="525.4" rx="42.3" ry="53.8" fill="none" stroke="#161616" stroke-width="1" opacity=".8" transform="rotate(8 1266.5 525.4)"/>
<ellipse cx="1274.5" cy="525" rx="36" ry="53.2" fill="#141414" transform="rotate(8 1274.5 525)"/>
<ellipse cx="1274.5" cy="525" rx="33.8" ry="50.0" fill="none" stroke="#232323" stroke-width="1.2" transform="rotate(8 1274.5 525)"/>
<clipPath id="rwc"><ellipse cx="1274.8" cy="527.5" rx="31.7" ry="42.8" transform="rotate(8 1274.8 527.5)"/></clipPath>
<ellipse cx="1274.8" cy="527.5" rx="32.2" ry="43.5" fill="#1b1b1b" transform="rotate(8 1274.8 527.5)"/>
<g clip-path="url(#rwc)">
<ellipse cx="1266" cy="520" rx="21" ry="31" fill="#a8006f"/>
<path d="M1272 524 1310 500 1310 580 1262 580Z" fill="#1b1b1b"/>
<path d="M1262 490 1284 484 1284 512 1268 516Z" fill="#1b1b1b" opacity=".75"/>
<path d="M1252 548 1266 540 1268 566 1256 566Z" fill="#7c7c7c"/>
<ellipse cx="1281" cy="518" rx="6" ry="7" fill="#a8006f"/>
<path d="M1267.2 516.3L1270.0 483.6" stroke="#595959" stroke-width="2.8"/>
<path d="M1268.9 517.3L1272.2 484.8" stroke="#b6b6b6" stroke-width="2.2" stroke-linecap="round"/>
<path d="M1273.1 518.1L1280.5 483.5" stroke="#595959" stroke-width="2.8"/>
<path d="M1274.9 519.1L1282.6 484.7" stroke="#b6b6b6" stroke-width="2.2" stroke-linecap="round"/>
<path d="M1273.8 519.0L1300.2 503.2" stroke="#595959" stroke-width="2.8"/>
<path d="M1275.5 520.0L1302.3 504.4" stroke="#b6b6b6" stroke-width="2.2" stroke-linecap="round"/>
<path d="M1275.4 525.0L1303.1 514.1" stroke="#595959" stroke-width="2.8"/>
<path d="M1277.1 526.0L1305.2 515.3" stroke="#b6b6b6" stroke-width="2.2" stroke-linecap="round"/>
<path d="M1275.1 527.2L1294.4 557.5" stroke="#595959" stroke-width="2.8"/>
<path d="M1276.9 528.2L1296.6 558.7" stroke="#b6b6b6" stroke-width="2.2" stroke-linecap="round"/>
<path d="M1268.6 533.4L1281.4 567.5" stroke="#595959" stroke-width="2.8"/>
<path d="M1270.3 534.4L1283.5 568.7" stroke="#b6b6b6" stroke-width="2.2" stroke-linecap="round"/>
<path d="M1268.8 533.4L1256.8 566.3" stroke="#595959" stroke-width="2.8"/>
<path d="M1270.5 534.4L1258.9 567.5" stroke="#b6b6b6" stroke-width="2.2" stroke-linecap="round"/>
<path d="M1263.4 529.2L1248.9 556.9" stroke="#595959" stroke-width="2.8"/>
<path d="M1265.2 530.2L1251.0 558.1" stroke="#b6b6b6" stroke-width="2.2" stroke-linecap="round"/>
<path d="M1264.1 518.9L1242.4 513.6" stroke="#595959" stroke-width="2.8"/>
<path d="M1265.9 519.9L1244.5 514.8" stroke="#b6b6b6" stroke-width="2.2" stroke-linecap="round"/>
<path d="M1263.4 529.2L1241.0 528.6" stroke="#595959" stroke-width="2.8"/>
<path d="M1265.2 530.2L1243.1 529.8" stroke="#b6b6b6" stroke-width="2.2" stroke-linecap="round"/>
<ellipse cx="1270.7" cy="525.7" rx="5.5" ry="7.4" fill="#2e2e2e"/>
<ellipse cx="1270.7" cy="525.7" rx="2.7" ry="3.7" fill="#111"/>
</g>
<ellipse cx="1274.8" cy="527.5" rx="32.2" ry="43.5" fill="none" stroke="#b9b9b9" stroke-width="1.3" transform="rotate(8 1274.8 527.5)"/>
</g>
</svg>
</div>
</body>
</html>
